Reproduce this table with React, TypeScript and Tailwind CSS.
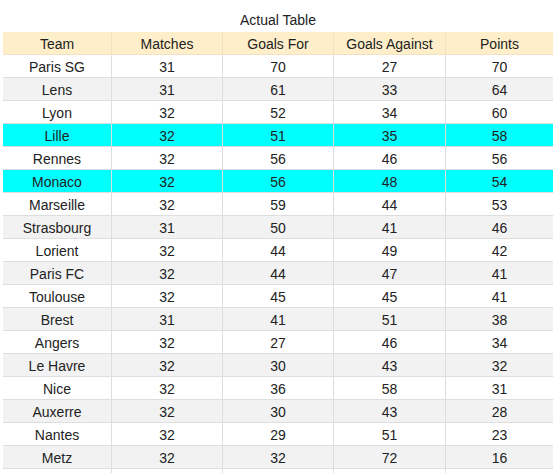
const rows: [string, number, number, number, number][] = [
  ['Paris SG', 31, 70, 27, 70],
  ['Lens', 31, 61, 33, 64],
  ['Lyon', 32, 52, 34, 60],
  ['Lille', 32, 51, 35, 58],
  ['Rennes', 32, 56, 46, 56],
  ['Monaco', 32, 56, 48, 54],
  ['Marseille', 32, 59, 44, 53],
  ['Strasbourg', 31, 50, 41, 46],
  ['Lorient', 32, 44, 49, 42],
  ['Paris FC', 32, 44, 47, 41],
  ['Toulouse', 32, 45, 45, 41],
  ['Brest', 31, 41, 51, 38],
  ['Angers', 32, 27, 46, 34],
  ['Le Havre', 32, 30, 43, 32],
  ['Nice', 32, 36, 58, 31],
  ['Auxerre', 32, 30, 43, 28],
  ['Nantes', 32, 29, 51, 23],
  ['Metz', 32, 32, 72, 16],
];

const highlighted = ['Lille', 'Monaco'];

export default function App() {
  return (
    <div className="w-[553px] h-[473px] overflow-hidden bg-white pl-[3px] font-['Liberation_Sans',Arial,sans-serif] text-[#222]">
      <div className="w-[550px]">
        {/* Title */}
        <div className="h-[32px] pt-[12px] text-center text-[14px] leading-[16px]">Actual Table</div>

        <table className="w-[550px] table-fixed border-separate border-spacing-0 text-[14px] leading-[16px]">
          <colgroup>
            <col className="w-[109px]" />
            <col className="w-[111px]" />
            <col className="w-[111px]" />
            <col className="w-[112px]" />
            <col className="w-[107px]" />
          </colgroup>
          <thead>
            <tr className="bg-[#feefca]">
              {['Team', 'Matches', 'Goals For', 'Goals Against', 'Points'].map((h) => (
                <th
                  key={h}
                  className="h-[23px] p-0 pt-[2px] text-center font-normal border-b border-r border-[#f0e2c2] last:border-r-0"
                >
                  {h}
                </th>
              ))}
            </tr>
          </thead>
          <tbody>
            {rows.map((r, i) => {
              const hl = highlighted.includes(r[0]);
              const bg = hl ? 'bg-[#00ffff]' : i % 2 === 1 ? 'bg-[#f2f2f2]' : 'bg-white';
              return (
                <tr key={i} className={bg}>
                  {r.map((v, j) => (
                    <td
                      key={j}
                      className="h-[23px] p-0 pt-[2px] text-center border-b border-r border-[#dedede] last:border-r-0"
                    >
                      {v}
                    </td>
                  ))}
                </tr>
              );
            })}
            {/* next row, cut off by the window */}
            <tr className="bg-white">
              {[0, 1, 2, 3, 4].map((j) => (
                <td key={j} className="h-[23px] p-0 border-r border-[#dedede] last:border-r-0" />
              ))}
            </tr>
          </tbody>
        </table>
      </div>
    </div>
  );
}
